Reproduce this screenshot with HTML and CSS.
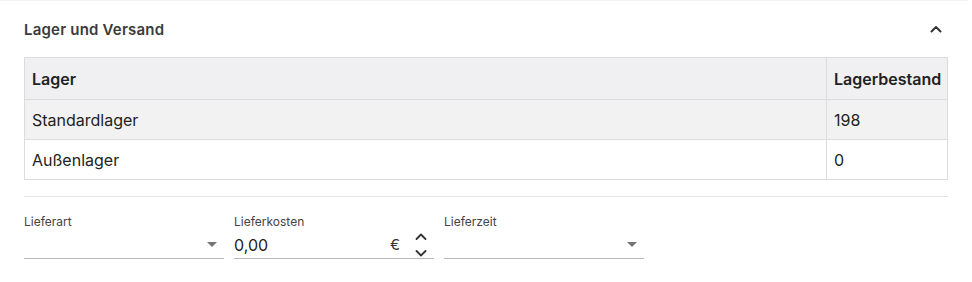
FILE: index.html
```html
<!DOCTYPE html>
<html lang="de">
<head>
<meta charset="utf-8">
<link rel="stylesheet" href="styles.css">
</head>
<body>
<section class="card">
  <header class="card-head">
    <h2 class="title">Lager und Versand</h2>
    <svg class="chev" width="12" height="8" viewBox="0 0 12 8"><path d="M1.5 6.5 L6 2 L10.5 6.5" fill="none" stroke="#333" stroke-width="2" stroke-linecap="round" stroke-linejoin="round"/></svg>
  </header>
  <table class="stock">
    <thead>
      <tr><th class="c-name">Lager</th><th class="c-qty">Lagerbestand</th></tr>
    </thead>
    <tbody>
      <tr class="alt"><td>Standardlager</td><td>198</td></tr>
      <tr><td>Außenlager</td><td>0</td></tr>
    </tbody>
  </table>
  <hr class="divider">
  <div class="fields">
    <div class="field">
      <label class="lbl">Lieferart</label>
      <div class="input">
        <span class="val"></span>
        <span class="caret"></span>
      </div>
    </div>
    <div class="field">
      <label class="lbl">Lieferkosten</label>
      <div class="input">
        <span class="val">0,00</span>
        <span class="cur">€</span>
        <span class="spin">
          <svg width="12" height="7" viewBox="0 0 12 7"><path d="M1.5 6 L6 1.5 L10.5 6" fill="none" stroke="#333" stroke-width="1.8" stroke-linecap="round" stroke-linejoin="round"/></svg>
          <svg width="12" height="7" viewBox="0 0 12 7"><path d="M1.5 1 L6 5.5 L10.5 1" fill="none" stroke="#333" stroke-width="1.8" stroke-linecap="round" stroke-linejoin="round"/></svg>
        </span>
      </div>
    </div>
    <div class="field">
      <label class="lbl">Lieferzeit</label>
      <div class="input">
        <span class="val"></span>
        <span class="caret"></span>
      </div>
    </div>
  </div>
</section>
</body>
</html>
```

FILE: styles.css
```css
* { box-sizing: border-box; }
html, body { margin: 0; padding: 0; background: #fff; }
body {
  font-family: Inter, "Noto Sans", sans-serif;
  color: #222;
  width: 972px;
  height: 282px;
  overflow: hidden;
}
.card {
  width: 968px;
  height: 282px;
  border-top: 1px solid #f2f2f2;
  padding: 0 24px 0 24px;
}
.card-head {
  height: 56px;
  display: flex;
  align-items: center;
  justify-content: space-between;
}
.title {
  margin: 0;
  font-size: 15px;
  font-weight: 600;
  color: #3b3b3b;
  letter-spacing: 0.2px;
  padding-top: 1px;
}
.chev { margin-right: 2px; }
.stock {
  width: 924px;
  border-collapse: collapse;
  font-size: 16px;
  color: #222;
}
.stock th, .stock td {
  border: 1px solid #dcdcdc;
  text-align: left;
  padding: 0 0 0 7px;
}
.stock th {
  height: 42px;
  font-weight: 600;
  background: #f0f0f2;
  color: #222;
}
.stock td { height: 40px; }
.stock .c-qty { width: 121px; }
.stock tr.alt td { background: #f2f2f2; }
.divider {
  border: 0;
  border-top: 1px solid #e3e3e3;
  margin: 16px 0 0 0;
  width: 924px;
}
.fields {
  display: flex;
  gap: 10px;
  padding-top: 18px;
}
.field { width: 200px; }
.lbl {
  display: block;
  font-size: 12px;
  color: #444;
  line-height: 14px;
  height: 14px;
}
.input {
  height: 30px;
  border-bottom: 1px solid #b8b8b8;
  display: flex;
  align-items: center;
  padding-top: 2px;
}
.val { flex: 1; font-size: 16px; color: #222; }
.caret {
  width: 0; height: 0;
  border-left: 5px solid transparent;
  border-right: 5px solid transparent;
  border-top: 5px solid #757575;
  margin-right: 7px;
}
.cur { font-size: 15px; color: #333; margin-right: 15px; }
.spin { display: flex; flex-direction: column; gap: 10px; margin-right: 7px; }
.spin svg { display: block; }
```
